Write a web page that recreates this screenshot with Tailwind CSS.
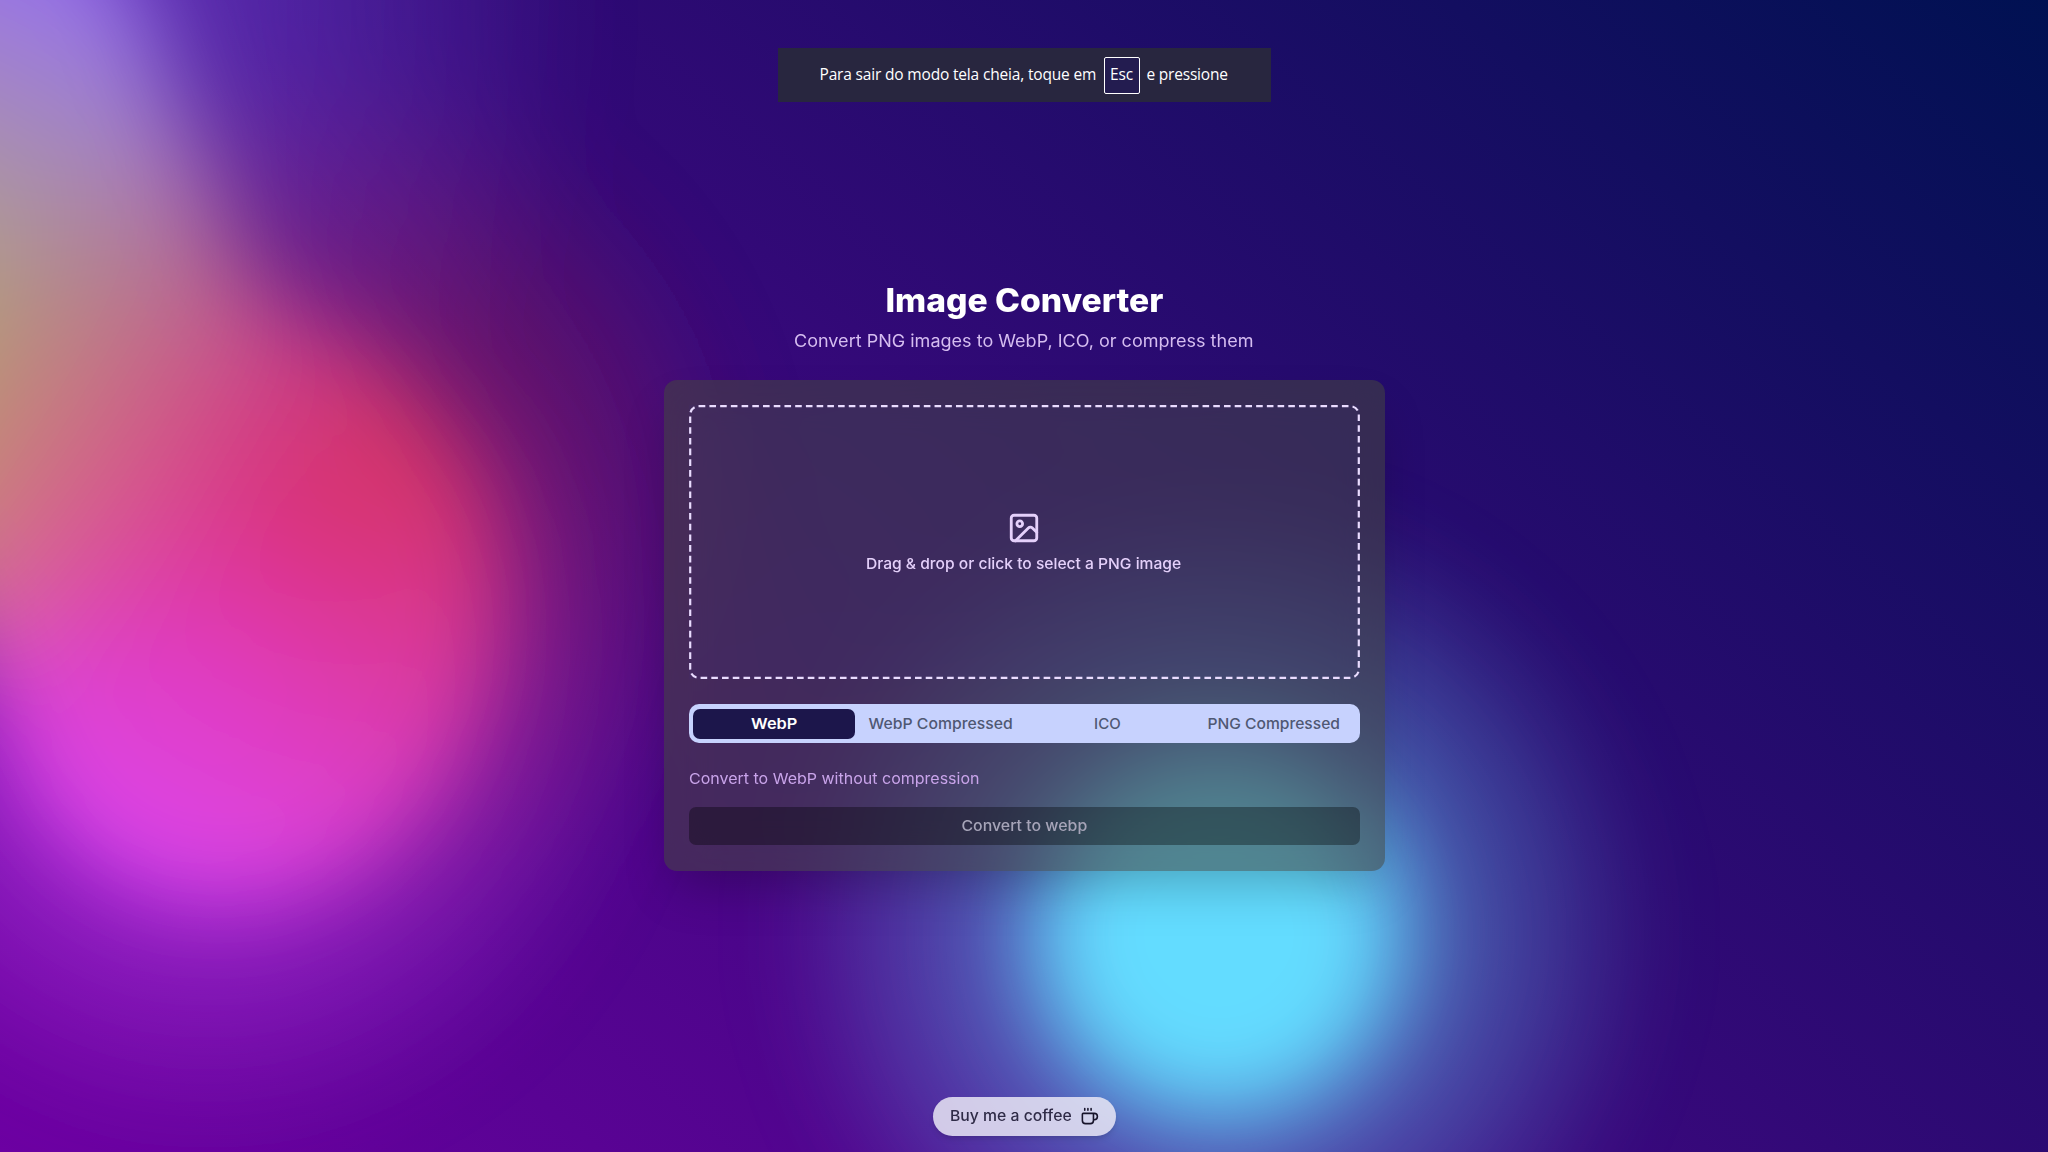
<!DOCTYPE html>
<html lang="en">
<head>
<meta charset="utf-8">
<title>Image Converter</title>
<script src="https://cdn.jsdelivr.net/npm/@tailwindcss/browser@4"></script>
</head>
<body>
<div class="relative h-[1152px] w-[2048px] overflow-hidden bg-[linear-gradient(40deg,rgb(108,0,162),rgb(0,17,82))] font-[Inter,sans-serif] text-white">
<svg class="absolute size-0"><defs><filter id="goo"><feGaussianBlur in="SourceGraphic" stdDeviation="10" result="blur"/><feColorMatrix in="blur" mode="matrix" values="1 0 0 0 0  0 1 0 0 0  0 0 1 0 0  0 0 0 18 -8" result="goo"/><feBlend in="SourceGraphic" in2="goo"/></filter></defs></svg>

<!-- Gradient blobs -->
<div class="absolute inset-0 [filter:url(#goo)_blur(43px)]">
  <div class="absolute w-[1540px] h-[867px] left-[-562px] top-[274px] mix-blend-hard-light bg-[radial-gradient(circle_at_center,rgba(221,74,255,0.8)_0,rgba(221,74,255,0)_50%)]"></div>
  <div class="absolute w-[1540px] h-[867px] left-[449px] top-[501px] mix-blend-hard-light bg-[radial-gradient(circle_at_center,rgba(100,220,255,0.8)_0,rgba(100,220,255,0)_50%)]"></div>
  <div class="absolute w-[1540px] h-[867px] left-[-450px] top-[72px] opacity-70 mix-blend-hard-light bg-[radial-gradient(circle_at_center,rgba(200,50,50,0.8)_0,rgba(200,50,50,0)_50%)]"></div>
  <div class="absolute w-[1540px] h-[867px] left-[-915px] top-[-145px] mix-blend-hard-light bg-[radial-gradient(circle_at_center,rgba(180,180,50,0.8)_0,rgba(180,180,50,0)_50%)]"></div>
  <div class="absolute w-full h-full -left-1/2 -top-1/2 opacity-70 mix-blend-hard-light bg-[radial-gradient(circle_at_center,rgba(140,100,255,0.8)_0,rgba(140,100,255,0)_50%)]"></div>
</div>

<div class="relative flex h-full flex-col items-center">
  <!-- Fullscreen notice -->
  <div class="mt-[48px] flex h-[54px] w-[493px] shrink-0 items-center bg-[#28263f] pl-[42px] font-['Open_Sans',sans-serif] text-[15.5px] whitespace-nowrap">
    <span class="w-[284px] tracking-[-0.17px]">Para sair do modo tela cheia, toque em</span>
    <kbd class="flex h-[37px] w-[36px] items-center justify-center rounded-[2px] border border-white bg-[#231c50] font-['Open_Sans',sans-serif] text-[15.5px] tracking-[-0.2px]">Esc</kbd>
    <span class="ml-[7px] tracking-[-0.2px]">e pressione</span>
  </div>

  <h1 class="mt-[178.5px] scale-x-[1.05] text-[32px] leading-10 font-extrabold tracking-[0px] whitespace-nowrap">Image Converter</h1>
  <p class="mt-[8.5px] scale-x-[1.06] text-[17px] leading-6 text-[#d5bdf0] whitespace-nowrap">Convert PNG images to WebP, ICO, or compress them</p>

  <main class="mt-[27px] flex h-[491px] w-[721px] shrink-0 flex-col rounded-[13px] bg-[#42453f]/57 px-[25px] pt-[25px] text-[15px] leading-5 shadow-2xl backdrop-blur-xl">
    <div class="relative flex h-[274px] flex-col items-center justify-center gap-[9px] bg-[#3424a0]/7 text-[#e4d0fa]">
      <svg class="absolute inset-0 size-full" viewBox="0 0 671 274" fill="none"><rect x="1.2" y="1.2" width="668.6" height="271.6" rx="8.5" stroke="#eadcff" stroke-width="2.2" stroke-dasharray="6.6 4.12"/></svg>
      <svg class="size-[34px]" viewBox="0 0 24 24" fill="none" stroke="currentColor" stroke-width="2" stroke-linecap="round" stroke-linejoin="round"><rect width="18" height="18" x="3" y="3" rx="2"/><circle cx="9" cy="9" r="2"/><path d="m21 15-3.086-3.086a2 2 0 0 0-2.828 0L6 21"/></svg>
      <span class="scale-x-[1.04] font-medium">Drag &amp; drop or click to select a PNG image</span>
    </div>
    <div class="mt-[25px] grid h-[39px] grid-cols-4 rounded-[10px] bg-[#c7d2fe] px-[2px] py-[4.5px] font-medium text-[#4f5873] whitespace-nowrap">
      <div class="mx-[2px] flex items-center justify-center rounded-[7px] bg-[#1c164b] font-semibold text-white"><span class="scale-x-[1.09]">WebP</span></div>
      <div class="flex items-center justify-center"><span class="scale-x-[1.05]">WebP Compressed</span></div>
      <div class="flex items-center justify-center">ICO</div>
      <div class="flex items-center justify-center"><span class="scale-x-[1.04]">PNG Compressed</span></div>
    </div>
    <p class="mt-[26px] origin-left scale-x-[1.067] self-start text-[#c9a4ea]">Convert to WebP without compression</p>
    <button class="mt-[18px] flex h-[38px] items-center justify-center rounded-[7px] bg-black/35 font-medium text-[#a6a4b8]"><span class="scale-x-[1.06]">Convert to webp</span></button>
  </main>

  <a class="mt-[226px] flex h-[39px] w-[183px] items-center rounded-full bg-[#e9e6f5]/85 pl-[17.5px] text-[15px] font-medium whitespace-nowrap text-[#2f2b47] shadow-md">
    <span class="w-[130px] origin-left"><span class="inline-block origin-left scale-x-[1.05]">Buy me a coffee</span></span>
    <svg class="size-[19px] text-[#17142b]" viewBox="0 0 24 24" fill="none" stroke="currentColor" stroke-width="2" stroke-linecap="round" stroke-linejoin="round"><path d="M10 2v2M14 2v2M6 2v2M16 8a1 1 0 0 1 1 1v8a4 4 0 0 1-4 4H7a4 4 0 0 1-4-4V9a1 1 0 0 1 1-1h14a4 4 0 1 1 0 8h-1"/></svg>
  </a>
</div>
</div>
</body>
</html>
